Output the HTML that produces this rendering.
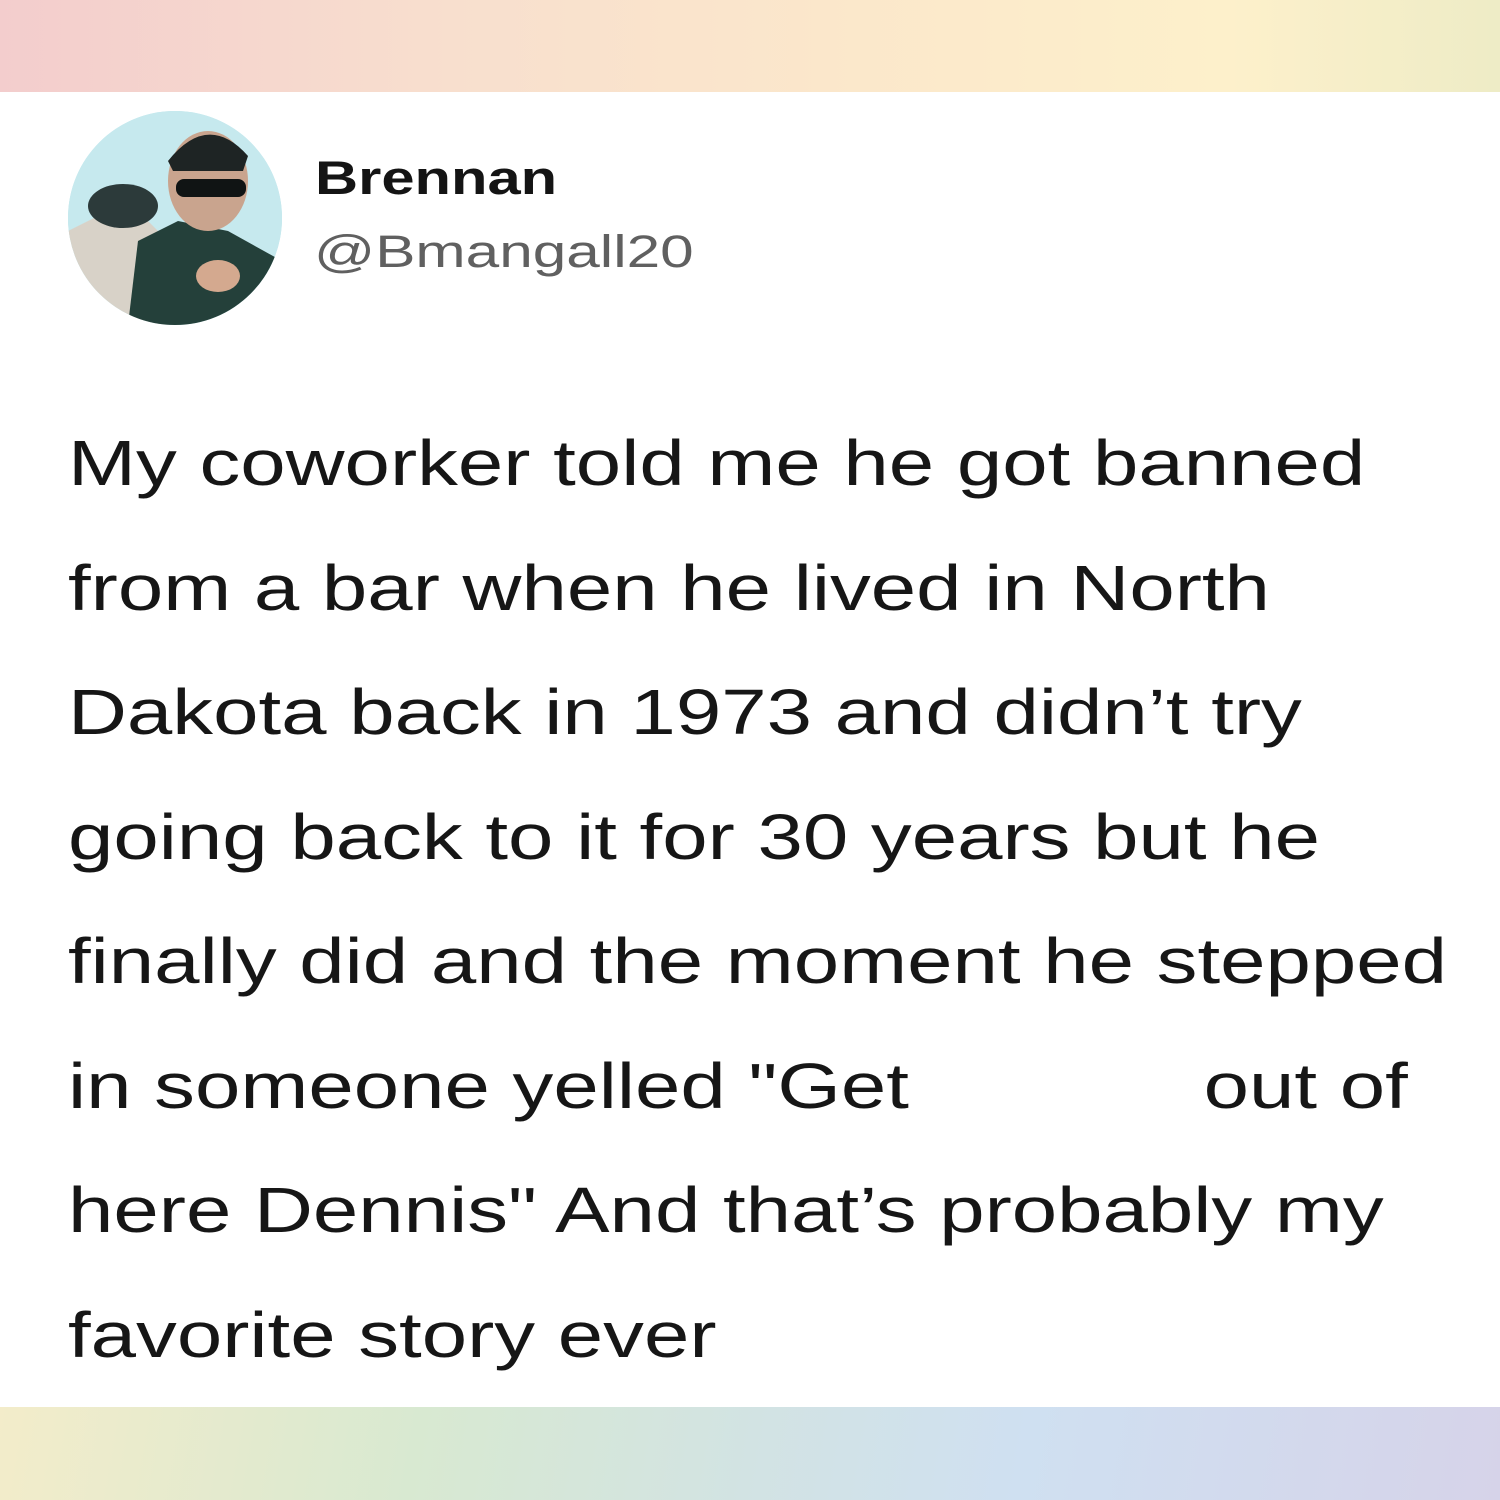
<!DOCTYPE html>
<html><head><meta charset="utf-8"><style>
html,body{margin:0;padding:0;width:1500px;height:1500px;overflow:hidden;background:#fff;font-family:"Liberation Sans",Arial,sans-serif}
.top{position:absolute;left:0;top:0;width:1500px;height:92px;background:linear-gradient(90deg,#f3cdcd 0%,#f8dfce 30%,#fbe7cb 55%,#fdf0cb 82%,#eeecc6 100%)}
.bot{position:absolute;left:0;top:1407px;width:1500px;height:93px;background:linear-gradient(100deg,#f3ecca 0%,#d8e9d1 28%,#d2e3e3 50%,#cfe0f1 68%,#d6d3e9 100%)}
.av{position:absolute;left:68px;top:111px;width:214px;height:214px;border-radius:50%;overflow:hidden;background:#bfe6ec}
.name{position:absolute;left:315px;top:150px;font-size:47px;font-weight:bold;color:#141414;transform:scaleX(1.27);transform-origin:0 0}
.handle{position:absolute;left:314px;top:226px;font-size:45px;color:#606060;transform:scaleX(1.34);transform-origin:0 0}
.txt{position:absolute;left:68px;top:401px;font-size:64px;line-height:124.5px;color:#161616;white-space:pre;transform:scaleX(1.275);transform-origin:0 0}
</style></head><body>
<div class="top"></div>
<div class="av"><svg width="214" height="214" viewBox="0 0 214 214">
<rect width="214" height="214" fill="#c6e9ee"/>
<path d="M0 120 L60 90 L90 120 L100 214 L0 214Z" fill="#d8d2c8"/>
<ellipse cx="55" cy="95" rx="35" ry="22" fill="#2c3a3a"/>
<path d="M60 214 L70 130 L110 110 L160 120 L214 150 L214 214Z" fill="#24403a"/>
<ellipse cx="140" cy="70" rx="40" ry="50" fill="#c9a48e"/>
<path d="M100 50 Q140 0 180 45 L175 60 L105 60Z" fill="#1e2424"/>
<rect x="108" y="68" width="70" height="18" rx="8" fill="#101414"/>
<ellipse cx="150" cy="165" rx="22" ry="16" fill="#d4a98f"/>
</svg></div>
<div class="name">Brennan</div>
<div class="handle">@Bmangall20</div>
<div class="txt">My coworker told me he got banned
from a bar when he lived in North
Dakota back in 1973 and didn’t try
going back to it for 30 years but he
finally did and the moment he stepped
in someone yelled "Get             out of
here Dennis" And that’s probably my
favorite story ever</div>
<div class="bot"></div>
</body></html>
